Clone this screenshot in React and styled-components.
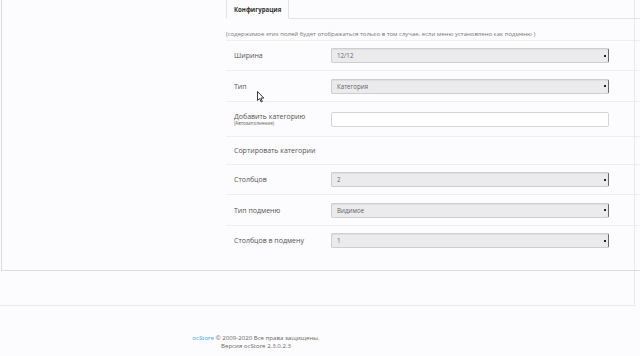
import styled, { createGlobalStyle } from "styled-components";
import React from "react";

const Global = createGlobalStyle`
  html, body {
    margin: 0;
    padding: 0;
    background: #fcfbfd;
    font-family: "Open Sans", "DejaVu Sans", sans-serif;
  }
`;

const Page = styled.div`
  width: 640px;
  height: 356px;
  overflow: hidden;
  position: relative;
`;
const OuterBox = styled.div`
  width: 634px;
  border-right: 1px solid #ebe9ed;
  border-bottom: 1px solid #ebe9ed;
  padding-bottom: 34px;
`;
const Panel = styled.div`
  margin-left: 1px;
  width: 621px;
  border: 1px solid #dddbdf;
  border-top: none;
  padding: 0 6px 15px 224px;
`;
const TabNav = styled.div`
  display: flex;
  height: 19px;
  border-bottom: 1px solid #e4e2e6;
  box-sizing: border-box;
`;
const Tab = styled.div`
  width: 63px;
  height: 19px;
  box-sizing: border-box;
  border: 1px solid #e4e2e6;
  border-top: none;
  border-bottom-color: #fcfbfd;
  background: #fcfbfd;
  font-size: 6.1px;
  font-weight: 700;
  color: #333;
  padding-left: 7px;
  display: flex;
  align-items: center;
`;
const Note = styled.div`
  font-size: 6px;
  color: #777;
  height: 21px;
  display: flex;
  align-items: flex-end;
  padding-bottom: 2px;
  box-sizing: border-box;
`;
const Row = styled.div`
  display: grid;
  grid-template-columns: 97px 278px;
  align-items: center;
  height: ${(p) => p.h}px;
  box-sizing: border-box;
  border-top: 1px solid #efedf1;
  padding: 0 8px;
`;
const Label = styled.div`
  font-size: 7px;
  color: #555;
  line-height: 9px;
`;
const Hint = styled.div`
  font-size: 4.6px;
  color: #666;
  line-height: 5px;
`;
const Select = styled.div`
  height: 15px;
  box-sizing: border-box;
  background: #ebeaec;
  border: 1px solid #cfcdd0;
  border-right: 1px solid #6a6a6a;
  border-radius: 2px;
  box-shadow: inset 0 1px 1px rgba(0, 0, 0, 0.06);
  display: flex;
  align-items: center;
  justify-content: space-between;
  padding: 0 2px 0 5px;
  font-size: 6.2px;
  color: #666;
`;
const Arrow = styled.span`
  width: 2px;
  height: 2px;
  background: #222;
`;
const Input = styled.div`
  height: 15px;
  box-sizing: border-box;
  background: #fff;
  border: 1px solid #d6d4d8;
  border-radius: 2px;
`;
const Footer = styled.div`
  width: 512px;
  text-align: center;
  padding-top: 28px;
  font-size: 6.1px;
  line-height: 8px;
  color: #666;
`;
const Link = styled.span`
  color: #3b9fd6;
`;
const Cursor = styled.svg`
  position: absolute;
  left: 257px;
  top: 91px;
`;

const rows = [
  { label: "Ширина", h: 30, ctl: "select", value: "12/12" },
  { label: "Тип", h: 31, ctl: "select", value: "Категория" },
  { label: "Добавить категорию", hint: "(Автозаполнение)", h: 35, ctl: "input" },
  { label: "Сортировать категории", h: 28 },
  { label: "Столбцов", h: 30, ctl: "select", value: "2" },
  { label: "Тип подменю", h: 31, ctl: "select", value: "Видимое" },
  { label: "Столбцов в подмену", h: 30, ctl: "select", value: "1" },
];

export default function App() {
  return (
    <Page>
      <Global />
      <OuterBox>
        <Panel>
          <TabNav>
            <Tab>Конфигурация</Tab>
          </TabNav>
          <Note>
            (содержимое этих полей будет отображаться только в том случае, если меню установлено как подменю )
          </Note>
          {rows.map((r) => (
            <Row key={r.label} h={r.h}>
              <div>
                <Label>{r.label}</Label>
                {r.hint && <Hint>{r.hint}</Hint>}
              </div>
              {r.ctl === "select" && (
                <Select>
                  <span>{r.value}</span>
                  <Arrow />
                </Select>
              )}
              {r.ctl === "input" && <Input />}
            </Row>
          ))}
        </Panel>
      </OuterBox>
      <Footer>
        <div>
          <Link>ocStore</Link> © 2009-2020 Все права защищены.
        </div>
        <div>Версия ocStore 2.3.0.2.3</div>
      </Footer>
      <Cursor width="8" height="12" viewBox="0 0 8 12">
        <path d="M0.5 0.5 L0.5 9.5 L2.6 7.6 L4.2 11 L5.4 10.4 L3.9 7.1 L6.8 7.1 Z" fill="#fff" stroke="#222" strokeWidth="0.9" />
      </Cursor>
    </Page>
  );
}
